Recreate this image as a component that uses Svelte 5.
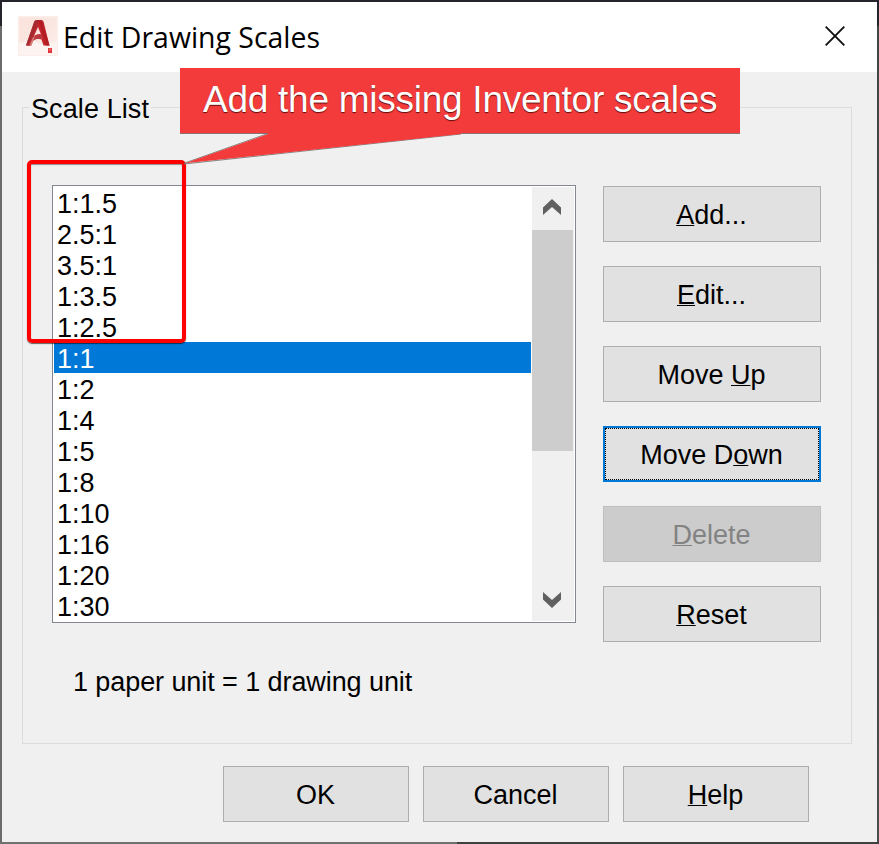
<script lang="ts">
	interface Action {
		before: string;
		key: string;
		after: string;
		focused?: boolean;
		disabled?: boolean;
	}

	const scales = [
		'1:1.5', '2.5:1', '3.5:1', '1:3.5', '1:2.5', '1:1', '1:2',
		'1:4', '1:5', '1:8', '1:10', '1:16', '1:20', '1:30'
	];

	const actions: Action[] = [
		{ before: '', key: 'A', after: 'dd...' },
		{ before: '', key: 'E', after: 'dit...' },
		{ before: 'Move ', key: 'U', after: 'p' },
		{ before: 'Move D', key: 'o', after: 'wn', focused: true },
		{ before: '', key: 'D', after: 'elete', disabled: true },
		{ before: '', key: 'R', after: 'eset' }
	];

	const footer: Action[] = [
		{ before: 'OK', key: '', after: '' },
		{ before: 'Cancel', key: '', after: '' },
		{ before: '', key: 'H', after: 'elp' }
	];

	let selected = $state('1:1');
</script>

{#snippet actionButton(action: Action)}
	<button class="btn" class:focused={action.focused} disabled={action.disabled}>
		<span class="label">{action.before}<span class="key">{action.key}</span>{action.after}</span>
	</button>
{/snippet}

<div class="frame">
	<div class="dialog">
		<header class="titlebar">
			<svg class="logo" width="40" height="40" viewBox="0 0 40 40">
				<defs>
					<linearGradient id="tile" x1="0" y1="0" x2="1" y2="1">
						<stop offset="0" stop-color="#fbe3dc" />
						<stop offset="0.5" stop-color="#fae6e0" />
						<stop offset="1" stop-color="#fdf1ed" />
					</linearGradient>
				</defs>
				<rect width="40" height="40" fill="#fcede8" />
				<rect x="1.5" y="1.5" width="37" height="37" fill="url(#tile)" />
				<path d="M1 27l12-3 10 4 16-2v13H1z" fill="#fdf3f0" />
				<path d="M8 29.500L16.300 5.500q.8-1.500 2.500-1.500h4.500q1.500 0 2.200 1.500L31.500 29.500h-6l-2-6q-5-2-8.300 1l-2 5z" fill="#c3262c" />
				<path d="M20 11L16 20q3.500-2.500 7-1.500z" fill="#fae5df" />
				<path d="M16.300 5.500q.8-1.500 2.500-1.500h2.200L14.500 21l-2.500 8.500H8z" fill="#a82a31" />
				<path d="M14 22q5-5 9.500-3.500l1.500 4.500q-6-2-11 2.500l-1.500 4H10z" fill="#b93a3e" />
				<path d="M20.500 5l3.500-.5L31.500 29.500H28z" fill="#b31c23" />
				<path d="M11.500 29.500l3.500-8 2-1.500-3.500 9.500z" fill="#d98280" />
				<rect x="30" y="32" width="4" height="5" fill="#e0343a" />
				<path d="M31.500 32.500v2M32.800 32.500v2" stroke="#f4a09c" stroke-width="0.600" />
			</svg>
			<h1 class="title"><span>Edit Drawing Scales</span></h1>
			<button class="close" aria-label="Close">
				<svg width="20" height="20" viewBox="0 0 20 20">
					<path d="M.7.7l18.600 18.600M19.300.7L.7 19.300" stroke="#111" stroke-width="1.900" />
				</svg>
			</button>
		</header>

		<main class="body">
			<fieldset class="group">
				<legend>Scale List</legend>
				<div class="columns">
					<div class="listbox">
						<ul class="items">
							{#each scales as scale}
								<li class:selected={scale === selected}>{scale}</li>
							{/each}
						</ul>
						<div class="scrollbar">
							<div class="arrow up">
								<svg width="18" height="16" viewBox="0 0 18 16">
									<path d="M0 8.500L9 0l9 8.500V16L9 8 0 16z" fill="#606060" />
								</svg>
							</div>
							<div class="thumb"></div>
							<div class="arrow down">
								<svg width="18" height="16" viewBox="0 0 18 16">
									<path d="M0 7.500L9 16l9-8.500V0L9 8 0 0z" fill="#606060" />
								</svg>
							</div>
						</div>
					</div>
					<div class="actions">
						{#each actions as action}
							{@render actionButton(action)}
						{/each}
					</div>
				</div>
				<p class="units">1 paper unit = 1 drawing unit</p>
			</fieldset>

			<div class="footer">
				{#each footer as action}
					{@render actionButton(action)}
				{/each}
			</div>
		</main>
	</div>

	<div class="highlight"></div>
	<div class="callout">
		<svg class="pointer" width="290" height="34" viewBox="0 0 290 34">
			<path d="M88 .5L4 30.300M4 31L281 1" fill="none" stroke="#777" stroke-width="0.900" />
			<path d="M88 0v1L5 30.300 281 1V0z" fill="#f43b3b" />
		</svg>
		<span class="callout-text">Add the missing Inventor scales</span>
	</div>
</div>

<style>
	:global(body) {
		margin: 0;
		overflow: hidden;
	}

	.frame {
		position: relative;
		box-sizing: border-box;
		width: 879px;
		height: 844px;
		padding: 2px;
		background:
			linear-gradient(#26232a, #26232a) 0 0 / 879px 26px no-repeat,
			linear-gradient(90deg, #707070 457px, #404040 457px) 0 842px / 879px 2px no-repeat,
			linear-gradient(#444, #4c4c4c) 877px 26px / 2px 816px no-repeat,
			#6b6b6b;
		font-family: 'Liberation Sans', Arial, sans-serif;
		font-size: 27px;
		color: #000;
	}

	.dialog {
		display: flex;
		flex-direction: column;
		width: 875px;
		height: 840px;
		background: #f0f0f0;
	}

	.titlebar {
		display: flex;
		align-items: center;
		box-sizing: border-box;
		height: 70px;
		padding: 0 32px 2px 16px;
		background: #fff;
	}

	.logo {
		flex: none;
	}

	.title {
		flex: 1;
		margin: 2px 0 0 5px;
		font: 400 29px/40px 'Open Sans', 'Segoe UI', sans-serif;
		white-space: nowrap;
	}

	.title span {
		display: inline-block;
		transform: scaleX(0.98);
		transform-origin: left;
	}

	.close {
		display: flex;
		padding: 0;
		border: 0;
		background: none;
	}

	.body {
		padding: 20px 25px 0 20px;
	}

	.group {
		box-sizing: border-box;
		width: 830px;
		height: 652px;
		margin: 0;
		padding: 0 0 0 29px;
		border: 1px solid #dcdcdc;
	}

	legend {
		margin-left: -23px;
		padding: 4px 2px 0;
		line-height: 27px;
		letter-spacing: 0.1px;
	}

	.columns {
		display: flex;
		gap: 27px;
		margin-top: 62px;
	}

	.listbox {
		display: flex;
		box-sizing: border-box;
		width: 524px;
		height: 438px;
		padding: 1px;
		border: 1px solid #828790;
		background: #fff;
	}

	.items {
		flex: 1;
		margin: 0;
		padding: 0;
		list-style: none;
	}

	.items li {
		height: 31px;
		padding-left: 3px;
		line-height: 35px;
	}

	.items .selected {
		background: #0078d7;
		color: #fff;
	}

	.scrollbar {
		display: flex;
		flex-direction: column;
		width: 42px;
		margin-left: 1px;
		background: #f0f0f0;
	}

	.arrow {
		display: flex;
		justify-content: center;
		box-sizing: border-box;
		width: 40px;
		height: 43px;
	}

	.arrow.up {
		padding-top: 12px;
	}

	.arrow.down {
		margin-top: auto;
		padding-top: 14px;
	}

	.thumb {
		width: 41px;
		height: 221px;
		background: #cdcdcd;
	}

	.actions {
		display: flex;
		flex-direction: column;
		gap: 24px;
		width: 218px;
		margin-top: 1px;
	}

	.btn {
		display: flex;
		align-items: center;
		justify-content: center;
		box-sizing: border-box;
		width: 100%;
		height: 56px;
		padding: 2px 1px 0 0;
		border: 1px solid #adadad;
		background: #e1e1e1;
		color: #000;
		font: inherit;
	}

	.btn.focused {
		border: 2px solid #0078d7;
		outline: 1px dotted #000;
		outline-offset: -3px;
	}

	.btn:disabled {
		border-color: #bfbfbf;
		background: #ccc;
		color: #838383;
	}

	.label {
		white-space: pre;
	}

	.key {
		text-decoration: underline;
		text-decoration-thickness: 1px;
		text-decoration-skip-ink: none;
		text-underline-offset: 1px;
	}

	.units {
		margin: 25px 0 0 21px;
		line-height: 31px;
		letter-spacing: -0.08px;
	}

	.footer {
		display: flex;
		gap: 14px;
		width: 586px;
		margin: 22px 0 0 201px;
	}

	.highlight {
		position: absolute;
		left: 27px;
		top: 160px;
		box-sizing: border-box;
		width: 159px;
		height: 183px;
		border: 4px solid #f00;
		border-radius: 5px;
		box-shadow: 0 1px 1px rgba(0, 0, 0, 0.6), inset 0 1px 1px rgba(0, 0, 0, 0.4);
	}

	.callout {
		position: absolute;
		left: 180px;
		top: 68px;
		width: 560px;
		height: 65px;
		border-bottom: 1px solid #8a7272;
		background: #f43b3b;
		color: #fff;
	}

	.callout-text {
		display: block;
		padding-left: 23px;
		font-size: 37px;
		line-height: 64px;
		letter-spacing: -0.26px;
		white-space: nowrap;
		text-shadow: 0 1px 1px rgba(60, 0, 0, 0.8);
	}

	.pointer {
		position: absolute;
		left: 0;
		top: 65px;
	}
</style>
